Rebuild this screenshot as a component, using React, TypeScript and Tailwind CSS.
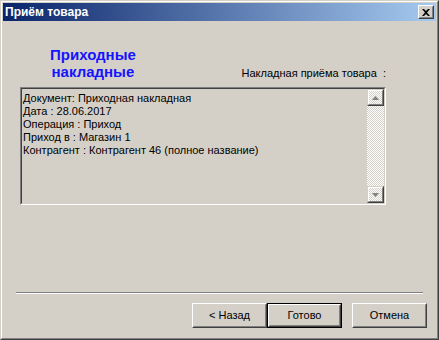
import { useState } from 'react';

const lines = [
  'Документ: Приходная накладная',
  'Дата : 28.06.2017',
  'Операция : Приход',
  'Приход в : Магазин 1',
  'Контрагент : Контрагент 46 (полное название)',
];

function ClassicButton({ label, isDefault }: { label: string; isDefault?: boolean }) {
  const face = (
    <div className="h-full w-full border border-white border-r-[#404040] border-b-[#404040]">
      <div className="flex h-full w-full items-center justify-center border border-[#d4d0c8] border-r-[#808080] border-b-[#808080] text-[11px] text-black">
        {label}
      </div>
    </div>
  );
  return (
    <button className={`h-[25px] w-[75px] p-0 ${isDefault ? 'border border-black' : ''}`}>{face}</button>
  );
}

function ScrollArrow({ up }: { up?: boolean }) {
  return (
    <div className="h-[17px] w-[17px] border border-[#d4d0c8] border-r-[#404040] border-b-[#404040]">
      <div className="flex h-full w-full items-center justify-center border border-white border-r-[#808080] border-b-[#808080]">
        <svg width="7" height="4" viewBox="0 0 7 4">
          {up ? <path d="M3.5 0 L7 4 L0 4 Z" fill="#808080" /> : <path d="M0 0 L7 0 L3.5 4 Z" fill="#808080" />}
        </svg>
      </div>
    </div>
  );
}

export default function App() {
  const [text] = useState(lines);

  return (
    <div
      className="h-[340px] w-[439px] border border-[#d4d0c8] border-r-[#404040] border-b-[#404040] bg-[#d4d0c8]"
      style={{ fontFamily: '"Liberation Sans", Arial, sans-serif' }}
    >
      <div className="flex h-full w-full flex-col border border-white border-r-[#808080] border-b-[#808080] p-px">
        {/* title bar */}
        <div className="flex h-[18px] shrink-0 items-center justify-between bg-[linear-gradient(to_right,#0a246a,#a6caf0)] pl-[2px] pr-[2px]">
          <span className="text-[12px] font-bold text-white">Приём товара</span>
          <div className="h-[14px] w-[16px] border border-white border-r-[#404040] border-b-[#404040] bg-[#d4d0c8]">
            <div className="flex h-full w-full items-center justify-center border border-transparent border-r-[#808080] border-b-[#808080]">
              <svg width="8" height="7" viewBox="0 0 8 7">
                <path d="M0 0 L2 0 L4 2 L6 0 L8 0 L5 3.5 L8 7 L6 7 L4 5 L2 7 L0 7 L3 3.5 Z" fill="#000" />
              </svg>
            </div>
          </div>
        </div>

        {/* body */}
        <div className="flex flex-1 flex-col px-[17px]">
          <div className="flex items-end justify-between">
            <div className="ml-[30px] mt-[25px] text-center text-[15px] font-bold leading-[17px] text-[#1414ff]">
              <div>Приходные</div>
              <div>накладные</div>
            </div>
            <div className="mr-[33px] text-[11px] leading-[13px] text-black whitespace-pre">Накладная приёма товара  :</div>
          </div>

          <div className="mt-[7px] h-[118px] w-[366px] border border-[#808080] border-r-white border-b-white">
            <div className="flex h-full w-full border border-[#404040] border-r-[#d4d0c8] border-b-[#d4d0c8]">
              <div className="flex-1 pl-[1px] pt-[3px] text-[11px] leading-[13px] text-black">
                {text.map((l) => (
                  <div key={l} className="whitespace-nowrap">{l}</div>
                ))}
              </div>
              <div className="flex w-[17px] flex-col bg-[repeating-conic-gradient(#ffffff_0_25%,#d4d0c8_0_50%)] bg-[length:2px_2px]">
                <ScrollArrow up />
                <div className="flex-1" />
                <ScrollArrow />
              </div>
            </div>
          </div>

          <div className="flex-1" />

          <div className="mx-[-4px] border-t border-[#808080] border-b border-b-white" />

          <div className="mb-[9px] mr-[-8px] mt-[9px] flex justify-end">
            <ClassicButton label="< Назад" />
            <ClassicButton label="Готово" isDefault />
            <div className="w-[10px]" />
            <ClassicButton label="Отмена" />
          </div>
        </div>
      </div>
    </div>
  );
}
